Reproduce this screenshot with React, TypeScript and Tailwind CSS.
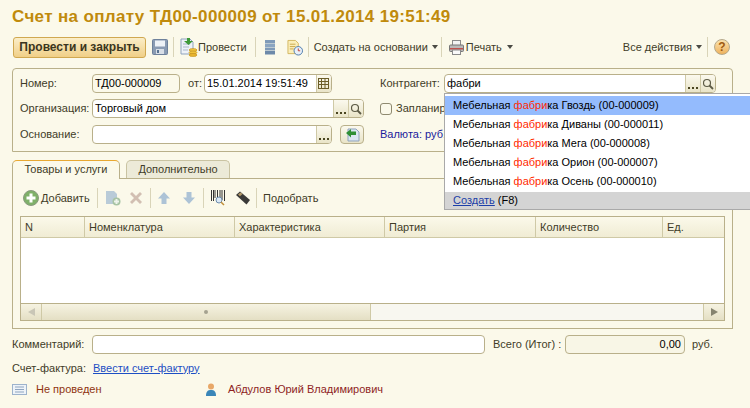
import type { ReactNode } from 'react';

const Sep = () => <div className="w-px h-[20px] bg-[#d9d4b8]" />;

const Caret = () => (
  <svg width="6" height="4" viewBox="0 0 6 4">
    <path d="M0 0h6L3 4z" fill="#4a4a44" />
  </svg>
);

const Dots = () => (
  <span className="w-[15px] h-full flex items-end justify-center border-l border-[#cfc9a6] bg-gradient-to-b from-[#fbf9ee] to-[#e9e4c8] pb-[3px] gap-[2px]">
    <i className="w-[2px] h-[2px] bg-[#4a4520]" />
    <i className="w-[2px] h-[2px] bg-[#4a4520]" />
    <i className="w-[2px] h-[2px] bg-[#4a4520]" />
  </span>
);

const Search = () => (
  <span className="w-[15px] h-full flex items-center justify-center border-l border-[#cfc9a6] bg-gradient-to-b from-[#fbf9ee] to-[#e9e4c8]">
    <svg width="12" height="12" viewBox="0 0 12 12" fill="none" stroke="#5c5a45">
      <circle cx="5" cy="5" r="3.5" strokeWidth="1.2" />
      <path d="M7.5 7.5L11 11" strokeWidth="1.8" />
    </svg>
  </span>
);

const Field = ({ w, text, bg = 'bg-white', children }: { w: string; text?: string; bg?: string; children?: ReactNode }) => (
  <div className={`${w} ${bg} h-[19px] rounded-[4px] border border-[#b9b08a] flex items-center overflow-hidden shrink-0`}>
    <span className="flex-1 pl-[2px] text-black leading-none whitespace-nowrap">{text}</span>
    {children}
  </div>
);

const SaveIcon = () => (
  <svg width="16" height="16" viewBox="0 0 16 16">
    <rect x="0.5" y="0.5" width="15" height="15" rx="1" fill="#8a9bb3" stroke="#6e819b" />
    <rect x="3" y="1.5" width="10" height="6" fill="#eef2f7" />
    <rect x="4" y="10" width="8" height="5" fill="#d9dfe7" />
    <rect x="5" y="11" width="2" height="3" fill="#5a7391" />
  </svg>
);

const PostIcon = () => (
  <svg width="18" height="19" viewBox="0 0 18 19">
    <path d="M1 1h9l3 3v12H1z" fill="#eef2f8" stroke="#8fa3bd" />
    <path d="M3 6h7M3 9h6M3 12h5" stroke="#a9b8cc" />
    <path d="M7 0h3v3h3l-4.5 4L4 3h3z" fill="#3f9a3a" />
    <ellipse cx="13" cy="12" rx="4" ry="1.5" fill="#f0c33c" stroke="#c08f1e" strokeWidth="0.6" />
    <ellipse cx="13" cy="14.5" rx="4" ry="1.5" fill="#f0c33c" stroke="#c08f1e" strokeWidth="0.6" />
    <ellipse cx="13" cy="17" rx="4" ry="1.5" fill="#e9b62f" stroke="#c08f1e" strokeWidth="0.6" />
  </svg>
);

const ListIcon = () => (
  <svg width="10" height="15" viewBox="0 0 10 15">
    <rect x="0" y="0" width="10" height="3.5" fill="#7f9ab8" />
    <rect x="0" y="4" width="10" height="3" fill="#8ba5c1" />
    <rect x="0" y="7.5" width="10" height="3" fill="#7f9ab8" />
    <rect x="0" y="11" width="10" height="3.5" fill="#6d89a9" />
  </svg>
);

const ReportIcon = () => (
  <svg width="16" height="17" viewBox="0 0 17 17">
    <path d="M1 1h8l3 3v11H1z" fill="#fbeeb8" stroke="#d1b45e" />
    <path d="M3 5h6M3 7.500h6M3 10h4" stroke="#c9a64a" />
    <circle cx="12" cy="12" r="4.500" fill="#e8f0f8" stroke="#4a78ab" />
    <path d="M12 9.500V12h2" stroke="#c0392b" fill="none" />
  </svg>
);

const PrintIcon = () => (
  <svg width="15" height="15" viewBox="0 0 15 15">
    <rect x="3.500" y="0.500" width="8" height="5" fill="#f3f3f3" stroke="#8a8a8a" />
    <rect x="0.500" y="5" width="14" height="6.500" rx="1" fill="#b9b9b9" stroke="#777" />
    <rect x="1" y="8" width="13" height="1.500" fill="#c0504d" />
    <rect x="3.500" y="10" width="8" height="4.500" fill="#fafafa" stroke="#8a8a8a" />
  </svg>
);

const ToolBtn = ({ d, fill }: { d: string; fill: string }) => (
  <svg width="16" height="16" viewBox="0 0 16 16">
    <path d={d} fill={fill} />
  </svg>
);

const Row = ({ children, className = '' }: { children: ReactNode; className?: string }) => (
  <div className={`flex items-center ${className}`}>{children}</div>
);

const columns = [
  { label: 'N', w: 'w-[64px]' },
  { label: 'Номенклатура', w: 'w-[150px]' },
  { label: 'Характеристика', w: 'w-[150px]' },
  { label: 'Партия', w: 'w-[151px]' },
  { label: 'Количество', w: 'w-[127px]' },
  { label: 'Ед.', w: 'flex-1' },
];

const suggestions = [
  { name: 'Гвоздь', code: '00-000009', active: true },
  { name: 'Диваны', code: '00-000011' },
  { name: 'Мега', code: '00-000008' },
  { name: 'Орион', code: '00-000007' },
  { name: 'Осень', code: '00-000010' },
];

export default function App() {
  return (
    <div
      className="relative w-[750px] h-[408px] overflow-hidden bg-[#fbf9ea] text-[11px] text-[#3f3c28] leading-none"
      style={{ fontFamily: '"Liberation Sans", Arial, sans-serif' }}
    >
      {/* Title */}
      <div className="pl-[12px] pt-[8px] h-[36px] text-[17px] tracking-[0.35px] font-bold text-[#c08a0c] whitespace-nowrap">
        Счет на оплату ТД00-000009 от 15.01.2014 19:51:49
      </div>

      {/* Command bar */}
      <Row className="h-[22px] pl-[13px] pr-[20px] whitespace-nowrap">
        <button className="w-[133px] h-[21px] rounded-[3px] border border-[#d0a850] bg-gradient-to-b from-[#fbeec8] to-[#f0cf87] text-[12px] font-bold text-[#3a3520]">
          Провести и закрыть
        </button>
        <span className="ml-[6px] mr-[5px]"><SaveIcon /></span>
        <Sep />
        <span className="ml-[6px]"><PostIcon /></span>
        <span>Провести</span>
        <span className="ml-[8px]"><Sep /></span>
        <span className="ml-[9px] mr-[12px]"><ListIcon /></span>
        <ReportIcon />
        <span className="ml-[5px] mr-[5px]"><Sep /></span>
        <span>Создать на основании</span>
        <span className="ml-[4px]"><Caret /></span>
        <span className="ml-[3px] mr-[7px]"><Sep /></span>
        <PrintIcon />
        <span className="ml-[2px]">Печать</span>
        <span className="ml-[5px]"><Caret /></span>
        <span className="ml-auto">Все действия</span>
        <span className="ml-[4px]"><Caret /></span>
        <span className="ml-[5px] mr-[6px]"><Sep /></span>
        <span className="w-[16px] h-[16px] rounded-full border border-[#b5a88a] bg-gradient-to-b from-[#fbe3ae] to-[#eeb25c] text-[#a05a10] text-[12px] font-bold flex items-center justify-center">?</span>
      </Row>

      {/* Header panel */}
      <div className="relative mt-[10px] ml-[12px] w-[721px] h-[84px] border border-[#b9b08a] rounded-t-[4px] pl-[7px] pt-[5px]">
        <div className="flex">
          <div className="w-[360px]">
            <Row className="h-[19px]">
              <span className="w-[72px]">Номер:</span>
              <Field w="w-[88px]" text="ТД00-000009" bg="bg-[#fbf9ea]" />
              <span className="ml-[8px] mr-[2px]">от:</span>
              <Field w="w-[128px]" text="15.01.2014 19:51:49">
                <span className="w-[15px] h-full flex items-center justify-center border-l border-[#cfc9a6] bg-gradient-to-b from-[#fbf9ee] to-[#e9e4c8]">
                  <svg width="11" height="11" viewBox="0 0 11 11">
                    <path d="M0 .5h11M0 3.500h11M0 6.500h11M0 10.500h11M.5 0v11M3.500 0v11M7 0v11M10.500 0v11" stroke="#6b5d28" />
                  </svg>
                </span>
              </Field>
            </Row>
            <Row className="h-[19px] mt-[6px]">
              <span className="w-[72px]">Организация:</span>
              <Field w="w-[272px]" text="Торговый дом">
                <Dots />
                <Search />
              </Field>
            </Row>
            <Row className="h-[19px] mt-[7px]">
              <span className="w-[72px]">Основание:</span>
              <Field w="w-[240px]">
                <Dots />
              </Field>
              <span className="ml-[8px] w-[24px] h-[19px] rounded-[4px] border border-[#b9b08a] bg-gradient-to-b from-[#fbf9ee] to-[#e9e4c8] flex items-center justify-center">
                <svg width="15" height="14" viewBox="0 0 15 14">
                  <path d="M3 1h8l3 3v9H3z" fill="#dbe6f2" stroke="#8fa3bd" />
                  <path d="M1 5l5-4v2.500h5V7H6v2.500z" fill="#2f8f35" />
                </svg>
              </span>
            </Row>
          </div>
          <div className="flex-1">
            <Row className="h-[19px]">
              <span className="w-[64px]">Контрагент:</span>
              <Field w="w-[272px]" text="фабри">
                <Dots />
                <Search />
              </Field>
            </Row>
            <Row className="h-[19px] mt-[6px]">
              <span className="w-[12px] h-[12px] rounded-[3px] border border-[#8f8a70] bg-[#fbf9ea] mr-[4px]" />
              <span>Запланир</span>
            </Row>
            <Row className="h-[19px] mt-[7px] text-[#1a1a9c]">Валюта: руб.</Row>
          </div>
        </div>
      </div>

      {/* Tabs */}
      <div className="flex items-end h-[19px] mt-[7px] ml-[12px] relative z-10">
        <div className="w-[108px] h-[19px] -mb-px pb-[2px] rounded-t-[5px] border border-b-0 border-[#b9b08a] border-t-[#e8a832] bg-[#fbf9ea] flex items-center justify-center">
          Товары и услуги
        </div>
        <div className="w-[104px] h-[18px] ml-[6px] pb-[1px] rounded-t-[5px] border border-b-0 border-[#c9c3a2] bg-[#ecead8] flex items-center justify-center">
          Дополнительно
        </div>
      </div>

      {/* Tab panel */}
      <div className="ml-[12px] w-[721px] h-[151px] border border-[#b9b08a] px-[7px] pt-[8px]">
        <Row className="h-[22px] pl-[3px]">
          <svg width="16" height="16" viewBox="0 0 16 16">
            <circle cx="8" cy="8" r="7.500" fill="#7fb069" stroke="#8a9a80" />
            <path d="M6.500 3.500h3v3h3v3h-3v3h-3v-3h-3v-3h3z" fill="#fff" />
          </svg>
          <span className="ml-[2px] w-[49px]">Добавить</span>
          <span className="ml-[7px] mr-[7px]"><Sep /></span>
          <svg width="16" height="16" viewBox="0 0 16 16">
            <path d="M1 1h8l3 3v10H1z" fill="#b9cbd8" />
            <circle cx="11.500" cy="11.500" r="4" fill="#a8c4a4" />
            <path d="M10.500 9h2v1.500H14v2h-1.500V14h-2v-1.500H9v-2h1.500z" fill="#eef4ec" />
          </svg>
          <span className="ml-[7px] mr-[6px]">
            <ToolBtn d="M2 4l2-2 4 4 4-4 2 2-4 4 4 4-2 2-4-4-4 4-2-2 4-4z" fill="#d2bfb2" />
          </span>
          <Sep />
          <span className="ml-[5px] mr-[9px]">
            <ToolBtn d="M8 2l6 6.500h-3.500V14h-5V8.500H2z" fill="#adc3d6" />
          </span>
          <ToolBtn d="M8 14L2 7.500h3.500V2h5v5.500H14z" fill="#adc3d6" />
          <span className="ml-[6px] mr-[7px]"><Sep /></span>
          <svg width="15" height="16" viewBox="0 0 15 16">
            <path d="M.5 0v11M2.500 0v11M4 0v8M6.500 0v7M9 0v7M11 0v10M13.500 0v11" stroke="#333" />
            <circle cx="8" cy="10" r="3" fill="#dbe8f4" stroke="#6d8cae" />
            <path d="M10 12l3 3" stroke="#c08f3a" strokeWidth="1.500" />
          </svg>
          <span className="ml-[9px] mr-[5px]">
            <svg width="16" height="16" viewBox="0 0 16 16">
              <path d="M1 5l4-3.500 10 8.500-3.500 4.500z" fill="#3a3a38" />
              <path d="M3 4.500l2.500-2 2 1.500-2.500 2.200z" fill="#b49a6a" />
            </svg>
          </span>
          <Sep />
          <span className="ml-[6px]">Подобрать</span>
        </Row>

        {/* Table */}
        <div className="mt-[7px] h-[105px] border border-[#b9b08a] bg-white flex flex-col">
          <div className="flex h-[21px] border-b border-[#cfc9a6] bg-gradient-to-b from-[#fbf9ea] to-[#f0ecd4] shrink-0">
            {columns.map((c) => (
              <div key={c.label} className={`${c.w} pl-[4px] flex items-center border-r border-[#cfc9a6] last:border-r-0`}>
                {c.label}
              </div>
            ))}
          </div>
          <div className="flex-1" />
          <div className="h-[17px] flex border-t border-[#b9b08a] bg-gradient-to-b from-[#f6f3e2] to-[#e4dfc4] shrink-0">
            <div className="w-[21px] border-r border-[#cfc9a6] flex items-center justify-center">
              <svg width="7" height="8" viewBox="0 0 7 8"><path d="M7 0v8L0 4z" fill="#c9c6b6" /></svg>
            </div>
            <div className="flex-1 flex items-center justify-center">
              <i className="w-[4px] h-[4px] rounded-full bg-[#a5a290]" />
            </div>
            <div className="w-[333px] bg-[#f8f7f0] border-l border-[#cfc9a6]" />
            <div className="w-[21px] border-l border-[#cfc9a6] flex items-center justify-center">
              <svg width="7" height="8" viewBox="0 0 7 8"><path d="M0 0v8l7-4z" fill="#85836f" /></svg>
            </div>
          </div>
        </div>
      </div>

      {/* Footer */}
      <Row className="mt-[6px] h-[19px] pl-[12px] whitespace-nowrap">
        <span className="w-[80px]">Комментарий:</span>
        <Field w="w-[393px]" />
        <span className="ml-[8px] w-[72px]">Всего (Итог) :</span>
        <div className="w-[120px] h-[19px] rounded-[4px] border border-[#b9b08a] bg-[#f8f6e6] flex items-center justify-end pr-[3px] text-black">0,00</div>
        <span className="ml-[7px]">руб.</span>
      </Row>
      <Row className="mt-[8px] h-[12px] pl-[12px]">
        <span className="w-[81px]">Счет-фактура:</span>
        <span className="text-[#1d4fc4] underline">Ввести счет-фактуру</span>
      </Row>
      <Row className="mt-[8px] h-[14px] pl-[12px] text-[#8f3410]">
        <svg width="15" height="11" viewBox="0 0 15 11" className="mr-[9px]">
          <rect x="0.500" y="0.500" width="14" height="10" fill="#eef3f8" stroke="#9db3cc" />
          <path d="M3 3h9M3 5.500h9M3 8h9" stroke="#8ea5c0" />
        </svg>
        <span className="w-[169px]">Не проведен</span>
        <svg width="12" height="13" viewBox="0 0 12 13" className="mr-[11px]">
          <circle cx="6" cy="3.500" r="3" fill="#e8a868" />
          <path d="M1 13c0-5 2-6 5-6s5 1 5 6z" fill="#3a86b8" />
        </svg>
        <span className="text-[#8f1f1f]">Абдулов Юрий Владимирович</span>
      </Row>

      {/* Autocomplete dropdown */}
      <div className="absolute left-[444px] top-[93px] w-[306px] h-[117px] pt-[2px] bg-white border-l border-b border-t border-[#a9a9a9] text-black">
        {suggestions.map((s) => (
          <div key={s.code} className={`h-[19px] pl-[8px] flex items-center whitespace-pre ${s.active ? 'bg-[#94bbfd]' : ''}`}>
            <span>
              Мебельная <span className="text-[#ff2a00]">фабри</span>ка {s.name} ({s.code})
            </span>
          </div>
        ))}
        <div className="h-[17px] mt-[1px] pl-[8px] flex items-center bg-[#d4d4d4] whitespace-pre">
          <span>
            <span className="text-[#1c3fa8] underline">Создать</span> (F8)
          </span>
        </div>
      </div>
    </div>
  );
}
